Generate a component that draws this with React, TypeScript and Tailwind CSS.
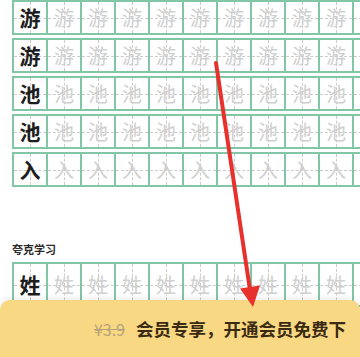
import React from 'react';

const cjk = { fontFamily: '"Noto Sans CJK SC", "Noto Sans", sans-serif' };

const rows = ['游', '游', '池', '池', '入'];

// one tian-zi-ge style cell with the dashed cross guides
const Cell: React.FC<{ ch: string; dark?: boolean }> = ({ ch, dark }) => (
  <div className="relative w-[34px] h-full shrink-0 border-r-2 border-[#82c7a5] flex items-center justify-center">
    <span className="absolute left-0 right-0 top-1/2 border-t border-dashed border-[#cccccc]"></span>
    <span className="absolute top-0 bottom-0 left-1/2 border-l border-dashed border-[#cccccc]"></span>
    <span
      className={`relative leading-none ${dark ? 'text-[21px] font-semibold text-[#1d1d1d]' : 'text-[20px] text-[#d0d0d0]'}`}
      style={cjk}
    >
      {ch}
    </span>
  </div>
);

const Row: React.FC<{ ch: string; className?: string }> = ({ ch, className = 'h-[35px]' }) => (
  <div className={`flex border-2 border-r-0 border-[#82c7a5] ${className}`}>
    <Cell ch={ch} dark />
    {Array.from({ length: 10 }).map((_, i) => (
      <Cell key={i} ch={ch} />
    ))}
  </div>
);

const App: React.FC = () => {
  return (
    <div className="relative w-[360px] h-[357px] overflow-hidden bg-white">
      {/* practice rows */}
      <div className="flex flex-col gap-[3px] pl-[12px]">
        {rows.map((ch, i) => (
          <Row key={i} ch={ch} />
        ))}
      </div>

      {/* second section */}
      <div className="pl-[12px] mt-[57px]">
        <h3 className="text-[11px] font-bold text-[#2a2a2a] leading-none mb-[7px]" style={cjk}>夸克学习</h3>
        <Row ch="姓" className="h-[45px]" />
      </div>

      {/* bottom vip bar */}
      <div className="absolute left-0 right-0 bottom-0 h-[57px] rounded-t-[10px] bg-[#f8d882] shadow-[0_-2px_6px_rgba(0,0,0,0.08)] flex items-center justify-end pr-[14px] gap-[11px]">
        <span className="text-[16px] text-[#b8a27c] line-through leading-none" style={cjk}>¥3.9</span>
        <span className="text-[17.5px] font-semibold text-[#3b2a12] leading-none" style={cjk}>会员专享，开通会员免费下</span>
      </div>

      {/* red annotation arrow */}
      <svg className="absolute inset-0 pointer-events-none" width="360" height="357" viewBox="0 0 360 357">
        <line x1="216" y1="63" x2="250" y2="290" stroke="#e8302c" strokeWidth="4" strokeLinecap="round" />
        <polygon points="253,307 240,288.5 260,285.5" fill="#e8302c" />
      </svg>
    </div>
  );
};

export default App;
